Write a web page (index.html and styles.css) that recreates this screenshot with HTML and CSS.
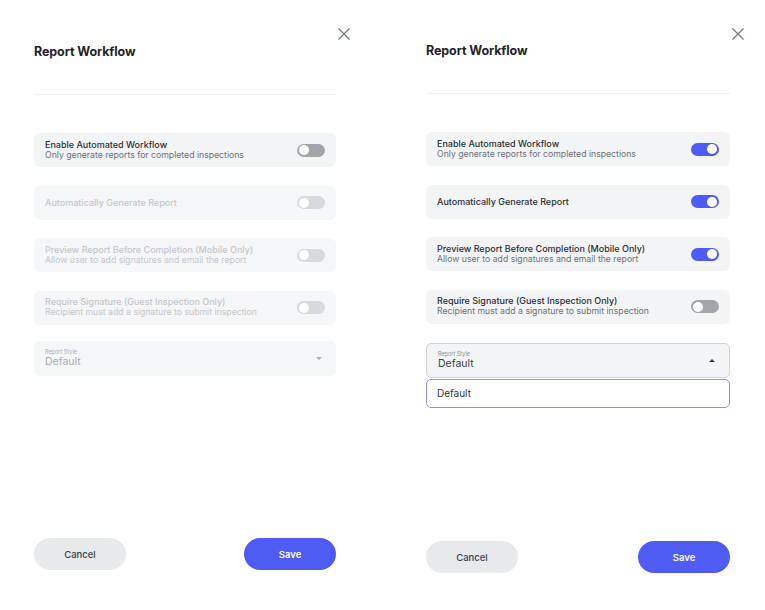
FILE: index.html
```html
<!DOCTYPE html>
<html lang="en">
<head>
    <meta charset="UTF-8">
    <meta name="viewport" content="width=device-width, initial-scale=1.0">
    <title>Report Workflow</title>
    <link rel="stylesheet" href="styles.css">
</head>
<body>
    <div class="page">
        <!-- workflow off: everything below the first switch is disabled -->
        <div class="panel">
            <button class="close" aria-label="Close">
                <svg width="12" height="12" viewBox="0 0 12 12"><path d="M0.5 0.5L11.5 11.5M11.5 0.5L0.5 11.5" stroke="#6f767d" stroke-width="1.2" fill="none"/></svg>
            </button>
            <h1>Report Workflow</h1>
            <div class="divider"></div>

            <div class="options">
                <div class="option">
                    <div class="option-text">
                        <div class="option-title">Enable Automated Workflow</div>
                        <div class="option-sub">Only generate reports for completed inspections</div>
                    </div>
                    <span class="switch"></span>
                </div>
                <div class="option disabled">
                    <div class="option-text">
                        <div class="option-title">Automatically Generate Report</div>
                    </div>
                    <span class="switch"></span>
                </div>
                <div class="option disabled">
                    <div class="option-text">
                        <div class="option-title">Preview Report Before Completion (Mobile Only)</div>
                        <div class="option-sub">Allow user to add signatures and email the report</div>
                    </div>
                    <span class="switch"></span>
                </div>
                <div class="option disabled">
                    <div class="option-text">
                        <div class="option-title">Require Signature (Guest Inspection Only)</div>
                        <div class="option-sub">Recipient must add a signature to submit inspection</div>
                    </div>
                    <span class="switch"></span>
                </div>
                <div class="select disabled">
                    <div>
                        <div class="select-label">Report Style</div>
                        <div class="select-value">Default</div>
                    </div>
                    <span class="caret"></span>
                </div>
            </div>

            <div class="footer">
                <button class="btn btn-cancel">Cancel</button>
                <button class="btn btn-save">Save</button>
            </div>
        </div>

        <!-- workflow on, style dropdown open -->
        <div class="panel panel-open">
            <button class="close" aria-label="Close">
                <svg width="12" height="12" viewBox="0 0 12 12"><path d="M0.5 0.5L11.5 11.5M11.5 0.5L0.5 11.5" stroke="#6f767d" stroke-width="1.2" fill="none"/></svg>
            </button>
            <h1>Report Workflow</h1>
            <div class="divider"></div>

            <div class="options">
                <div class="option">
                    <div class="option-text">
                        <div class="option-title">Enable Automated Workflow</div>
                        <div class="option-sub">Only generate reports for completed inspections</div>
                    </div>
                    <span class="switch on"></span>
                </div>
                <div class="option">
                    <div class="option-text">
                        <div class="option-title">Automatically Generate Report</div>
                    </div>
                    <span class="switch on"></span>
                </div>
                <div class="option">
                    <div class="option-text">
                        <div class="option-title">Preview Report Before Completion (Mobile Only)</div>
                        <div class="option-sub">Allow user to add signatures and email the report</div>
                    </div>
                    <span class="switch on"></span>
                </div>
                <div class="option">
                    <div class="option-text">
                        <div class="option-title">Require Signature (Guest Inspection Only)</div>
                        <div class="option-sub">Recipient must add a signature to submit inspection</div>
                    </div>
                    <span class="switch"></span>
                </div>
                <div class="select-wrap">
                    <div class="select open">
                        <div>
                            <div class="select-label">Report Style</div>
                            <div class="select-value">Default</div>
                        </div>
                        <span class="caret up"></span>
                    </div>
                    <div class="menu">
                        <div class="menu-item">Default</div>
                    </div>
                </div>
            </div>

            <div class="footer">
                <button class="btn btn-cancel">Cancel</button>
                <button class="btn btn-save">Save</button>
            </div>
        </div>
    </div>
</body>
</html>
```

FILE: styles.css
```css
body {
    margin: 0;
    padding: 0;
    background-color: #fff;
    font-family: Inter, Lato, sans-serif;
    color: #2c3036;
}
.page {
    display: flex;
    gap: 90px;
    padding-left: 34px;
}
.panel {
    position: relative;
    width: 302px;
    height: 570px;
    padding-top: 44px;
    box-sizing: border-box;
    display: flex;
    flex-direction: column;
}
.panel-open {
    width: 304px;
    height: 573px;
    padding-top: 43px;
}
.close {
    position: absolute;
    top: 28px;
    right: -14px;
    padding: 0;
    border: none;
    background: none;
    width: 12px;
    height: 12px;
    cursor: pointer;
}
.close svg {
    display: block;
}
h1 {
    margin: 0;
    font-size: 12.5px;
    line-height: 16px;
    font-weight: 700;
    color: #1f2328;
    letter-spacing: -0.1px;
}
.divider {
    height: 1px;
    background-color: #f0f1f2;
    margin-top: 34px;
}
.options {
    display: flex;
    flex-direction: column;
    gap: 18.5px;
    margin-top: 38px;
}
.option {
    display: flex;
    align-items: center;
    justify-content: space-between;
    height: 34px;
    padding: 0 11px;
    background-color: #f3f4f5;
    border-radius: 6px;
}
.option-title {
    font-size: 9px;
    line-height: 11px;
    font-weight: 500;
    color: #2a2e34;
}
.option-sub {
    font-size: 8.7px;
    line-height: 11.5px;
    color: #6c7177;
}
.option.disabled {
    background-color: #f5f6f7;
}
.option.disabled .option-title,
.option.disabled .option-sub {
    color: #c4c7cb;
}
.switch {
    position: relative;
    width: 28px;
    height: 13px;
    border-radius: 7px;
    background-color: #a2a6ab;
    flex-shrink: 0;
}
.switch::after {
    content: "";
    position: absolute;
    top: 1.5px;
    left: 2px;
    width: 10px;
    height: 10px;
    border-radius: 50%;
    background-color: #fff;
}
.switch.on {
    background-color: #4f5bf5;
}
.switch.on::after {
    left: 16px;
}
.option.disabled .switch {
    background-color: #d7d9dc;
}
.select {
    display: flex;
    align-items: center;
    justify-content: space-between;
    height: 35px;
    padding: 0 11px;
    box-sizing: border-box;
    background-color: #f3f4f5;
    border-radius: 5px;
    margin-top: -2px;
}
.select.disabled {
    background-color: #f5f6f7;
}
.select-label {
    font-size: 5.5px;
    line-height: 7px;
    color: #8a8f95;
}
.select-value {
    font-size: 10.5px;
    line-height: 12px;
    color: #3a3f45;
}
.select.disabled .select-label,
.select.disabled .select-value {
    color: #a9adb2;
}
.caret {
    width: 0;
    height: 0;
    border-left: 3.5px solid transparent;
    border-right: 3.5px solid transparent;
    border-top: 3.5px solid #aeb2b6;
    margin-right: 3px;
}
.caret.up {
    border-top: none;
    border-bottom: 3.5px solid #3a3f45;
}
.select-wrap {
    margin-top: 1px;
}
.select.open {
    margin-top: 0;
    border: 1px solid #d2d5d8;
}
.menu {
    margin-top: 1px;
    border: 1px solid #8d93e6;
    border-radius: 5px;
    background-color: #fff;
}
.menu-item {
    height: 27px;
    line-height: 27px;
    padding: 0 10px;
    font-size: 10px;
    color: #2f343a;
}
.footer {
    margin-top: auto;
    display: flex;
    justify-content: space-between;
}
.btn {
    width: 92px;
    height: 32px;
    border: none;
    border-radius: 16px;
    font-family: inherit;
    font-size: 9.5px;
    font-weight: 500;
    cursor: pointer;
}
.btn-cancel {
    background-color: #e8e9eb;
    color: #3c4147;
}
.btn-save {
    background-color: #4f5bf5;
    color: #fff;
    font-weight: 600;
}
```
